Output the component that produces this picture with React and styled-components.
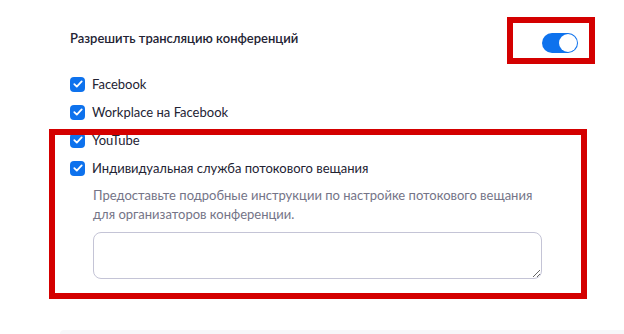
import styled, { createGlobalStyle } from "styled-components";

const GlobalStyle = createGlobalStyle`
  html, body {
    margin: 0;
    padding: 0;
    background: #ffffff;
    overflow: hidden;
  }
  body {
    font-family: Lato, "Noto Sans", sans-serif;
    color: #232333;
  }
`;

const Page = styled.div`
  position: relative;
  width: 624px;
  height: 334px;
  display: flex;
  flex-direction: column;
`;

const Section = styled.div`
  padding: 28px 46px 0 70px;
  display: flex;
  flex-direction: column;
`;

const HeaderRow = styled.div`
  display: flex;
  justify-content: space-between;
  align-items: flex-start;
`;

const Title = styled.div`
  font-size: 13px;
  line-height: 20px;
  font-weight: 600;
  color: #232333;
`;

const Toggle = styled.div`
  margin-top: 5px;
  width: 36px;
  height: 20px;
  border-radius: 10px;
  background: ${(p) => (p.on ? "#0e72ed" : "#babacc")};
  display: flex;
  align-items: center;
  justify-content: ${(p) => (p.on ? "flex-end" : "flex-start")};
  padding: 0 1px;
  box-sizing: border-box;
`;

const Knob = styled.div`
  width: 18px;
  height: 18px;
  border-radius: 50%;
  background: #ffffff;
`;

const List = styled.div`
  margin-top: 17px;
  display: flex;
  flex-direction: column;
`;

const Row = styled.label`
  display: flex;
  align-items: center;
  height: 28px;
  font-size: 13px;
  color: #232333;
`;

const Box = styled.span`
  width: 15px;
  height: 15px;
  border-radius: 4px;
  background: #0e72ed;
  display: flex;
  align-items: center;
  justify-content: center;
  margin-right: 7px;
  flex-shrink: 0;
`;

const Details = styled.div`
  padding-left: 23px;
  margin-top: 4px;
  display: flex;
  flex-direction: column;
`;

const Hint = styled.div`
  font-size: 13px;
  line-height: 19px;
  color: #747487;
`;

const TextArea = styled.textarea`
  margin-top: 8px;
  width: 449px;
  height: 47px;
  box-sizing: border-box;
  border: 1px solid #c4c4d6;
  border-radius: 8px;
  font-family: inherit;
  font-size: 13px;
  padding: 6px 10px;
  resize: both;
  outline: none;
`;

const Footer = styled.div`
  margin-top: auto;
  margin-left: 60px;
  height: 4px;
  background: #f7f7f9;
  border-top-left-radius: 6px;
`;

const Highlight = styled.div`
  position: absolute;
  left: ${(p) => p.x}px;
  top: ${(p) => p.y}px;
  width: ${(p) => p.w}px;
  height: ${(p) => p.h}px;
  border: 6px solid #d40000;
  box-sizing: border-box;
  pointer-events: none;
`;

function Check() {
  return (
    <svg width="10" height="8" viewBox="0 0 10 8">
      <path
        d="M1.3 4.2 L3.8 6.6 L8.7 1.4"
        fill="none"
        stroke="#ffffff"
        strokeWidth="1.8"
        strokeLinecap="round"
        strokeLinejoin="round"
      />
    </svg>
  );
}

const options = [
  "Facebook",
  "Workplace на Facebook",
  "YouTube",
  "Индивидуальная служба потокового вещания",
];

export default function App() {
  return (
    <Page>
      <GlobalStyle />
      <Section>
        <HeaderRow>
          <Title>Разрешить трансляцию конференций</Title>
          <Toggle on>
            <Knob />
          </Toggle>
        </HeaderRow>
        <List>
          {options.map((o) => (
            <Row key={o}>
              <Box>
                <Check />
              </Box>
              {o}
            </Row>
          ))}
        </List>
        <Details>
          <Hint>
            Предоставьте подробные инструкции по настройке потокового вещания
            <br />
            для организаторов конференции.
          </Hint>
          <TextArea />
        </Details>
      </Section>
      <Footer />
      <Highlight x={507} y={17} w={88} h={47} />
      <Highlight x={49} y={129} w={538} h={170} />
    </Page>
  );
}
